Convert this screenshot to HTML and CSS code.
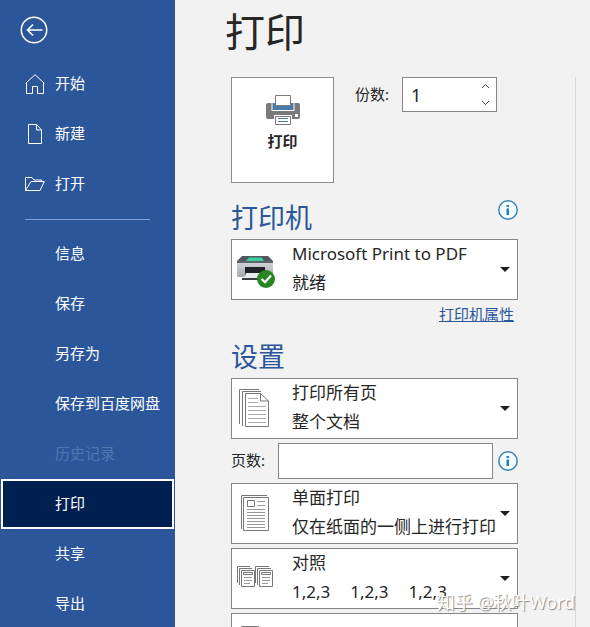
FILE: index.html
```html
<!DOCTYPE html>
<html lang="zh-CN">
<head>
  <meta charset="UTF-8" />
  <meta name="viewport" content="width=device-width, initial-scale=1.0" />
  <title>打印</title>
  <link rel="stylesheet" href="styles.css">
</head>
<body>
  <div class="backstage">
    <nav class="sidebar">
      <button type="button" class="back" aria-label="返回">
        <svg width="28" height="28" viewBox="0 0 28 28" fill="none" stroke="#fff">
          <circle cx="14" cy="14" r="12.7" stroke-width="1.5" />
          <path d="M22.5 14H7.5M13 8.5L7.5 14l5.500 5.500" stroke-width="1.6" />
        </svg>
      </button>

      <a href="#home" class="nav-item">
        <svg class="nav-icon" width="20" height="22" viewBox="0 0 20 22" fill="none" stroke="#fff">
          <path d="M1.500 9.500V20.500H7.500V13.500H12.500V20.500H18.500V9.500M.7 10.300L10 1.700l9.300 8.600" />
        </svg>
        开始
      </a>
      <a href="#new" class="nav-item">
        <svg class="nav-icon" width="20" height="22" viewBox="0 0 20 22" fill="none" stroke="#fff">
          <path d="M3.500 1.500H11.500L16.500 7V20.500H3.500ZM11.500 1.500V7H16.500" />
        </svg>
        新建
      </a>
      <a href="#open" class="nav-item">
        <svg class="nav-icon" width="20" height="22" viewBox="0 0 20 22" fill="none" stroke="#fff">
          <path d="M.5 17.500V4.500H7L9 7H16.500V8.500M.5 17.500L6 8.500H19.300L15 17.500Z" />
        </svg>
        打开
      </a>

      <hr class="nav-divider">

      <a href="#info" class="nav-item">信息</a>
      <a href="#save" class="nav-item">保存</a>
      <a href="#save-as" class="nav-item">另存为</a>
      <a href="#save-cloud" class="nav-item">保存到百度网盘</a>
      <a class="nav-item disabled" aria-disabled="true">历史记录</a>
      <a href="#print" class="nav-item active" aria-current="page">打印</a>
      <a href="#share" class="nav-item">共享</a>
      <a href="#export" class="nav-item">导出</a>
    </nav>

    <main class="content">
      <h1>打印</h1>

      <form class="panel">
        <div class="print-row">
          <button type="submit" class="print-button">
            <svg width="36" height="32" viewBox="0 0 36 32">
              <path d="M3 9H33Q35 9 35 11V23Q35 25 33 25H3Q1 25 1 23V11Q1 9 3 9Z" fill="#7a7a7a" />
              <path d="M6.500 8H29.500V17H6.500Z" fill="#fff" />
              <path d="M7.500 9H28.500V16H7.500Z" fill="#4a7ba8" />
              <path d="M10.500 1.500H25.500V11.500H10.500Z" fill="#fff" stroke="#7a7a7a" />
              <path d="M9 21H27V25H9Z" fill="#fff" />
              <path d="M10.500 22.500H25.500V30.500H10.500Z" fill="#fff" stroke="#7a7a7a" />
              <path d="M13 24.500H23M13 27.500H23" stroke="#4a7ba8" />
              <path d="M30 20H33V23H30Z" fill="#fff" />
            </svg>
            打印
          </button>
          <div class="copies">
            <label for="copies">份数:</label>
            <div class="spinner">
              <input type="number" id="copies" min="1" value="1">
              <div class="spinner-buttons">
                <button type="button" aria-label="增加">
                  <svg width="9" height="6" viewBox="0 0 9 6" fill="none" stroke="#444"><path d="M1 5l3.500-3.500L8 5" /></svg>
                </button>
                <button type="button" aria-label="减少">
                  <svg width="9" height="6" viewBox="0 0 9 6" fill="none" stroke="#444"><path d="M1 1l3.500 3.500L8 1" /></svg>
                </button>
              </div>
            </div>
          </div>
        </div>

        <div class="section-head">
          <h2>打印机</h2>
          <button type="button" class="info" aria-label="打印机信息">
            <svg width="20" height="20" viewBox="0 0 20 20">
              <circle cx="10" cy="10" r="9.200" fill="#f2fbff" stroke="#3c83b3" stroke-width="1.500" />
              <path d="M8.500 5H11V7H8.500ZM8.500 8.500H11V15H8.500Z" fill="#2b79b5" />
            </svg>
          </button>
        </div>

        <div class="picker">
          <svg class="picker-icon" width="40" height="36" viewBox="0 0 40 36">
            <defs>
              <linearGradient id="body" x1="0" y1="0" x2="0" y2="1">
                <stop offset="0" stop-color="#d5d9de" />
                <stop offset="1" stop-color="#a3a9b0" />
              </linearGradient>
            </defs>
            <path d="M6 4H32L37 9H1Z" fill="#50575e" />
            <path d="M13 5.500H26L28 9H10Z" fill="#3ccf9e" />
            <path d="M1 9H37V24Q37 25 36 25H2Q1 25 1 24Z" fill="url(#body)" />
            <path d="M1 9H37V11H1Z" fill="#5d656d" />
            <path d="M9 15H29V23H9Z" fill="#202226" />
            <path d="M10 21H28V24L29 27H6L9 24Z" fill="#e8eaec" />
            <path d="M6 26H27V28H6Z" fill="#383b40" />
            <circle cx="30" cy="27" r="9" fill="#27861f" />
            <path d="M25.500 27L29 30.200L35 23.500" fill="none" stroke="#fff" stroke-width="2.200" />
          </svg>
          <select aria-label="打印机">
            <option>Microsoft Print to PDF</option>
          </select>
          <span class="picker-note">就绪</span>
          <span class="arrow"></span>
        </div>
        <div class="link-row">
          <a href="#printer-properties">打印机属性</a>
        </div>

        <div class="section-head">
          <h2>设置</h2>
        </div>

        <div class="settings">
          <div class="picker">
            <svg class="picker-icon" width="40" height="40" viewBox="0 0 40 40" fill="none" stroke="#777">
              <path d="M3.500 35V.5H23M6.500 37V2.500H25" />
              <path d="M9.500 4.500H24.500L32.500 12V37.500H9.500Z" fill="#fff" />
              <path d="M24.500 4.500V12H32.500" />
              <path d="M12 9.500H22M12 13.500H22M12 17.500H30M12 21.500H30M12 25.500H30M12 29.500H30M12 33.500H30" stroke="#aaa" />
            </svg>
            <select aria-label="打印范围">
              <option>打印所有页</option>
            </select>
            <span class="picker-note">整个文档</span>
            <span class="arrow"></span>
          </div>

          <div class="pages-row">
            <label for="pages">页数:</label>
            <input type="text" id="pages">
            <button type="button" class="info" aria-label="页数信息">
              <svg width="20" height="20" viewBox="0 0 20 20">
                <circle cx="10" cy="10" r="9.200" fill="#f2fbff" stroke="#3c83b3" stroke-width="1.500" />
                <path d="M8.500 5H11V7H8.500ZM8.500 8.500H11V15H8.500Z" fill="#2b79b5" />
              </svg>
            </button>
          </div>

          <div class="picker">
            <svg class="picker-icon" width="40" height="40" viewBox="0 0 40 40" fill="none" stroke="#777">
              <path d="M5.500 35V1.500H31" />
              <path d="M7.500 3.500H32.500V36.500H7.500Z" fill="#fff" />
              <path d="M11.500 6.500H18.500V12.500H11.500Z" />
              <path d="M21 7.500H29M21 11.500H29M11 15.500H29M11 18.500H29M11 21.500H29M11 24.500H29M11 27.500H29M11 30.500H29M11 33.500H29" stroke="#999" />
            </svg>
            <select aria-label="单双面">
              <option>单面打印</option>
            </select>
            <span class="picker-note">仅在纸面的一侧上进行打印</span>
            <span class="arrow"></span>
          </div>

          <div class="picker">
            <svg class="picker-icon" width="40" height="40" viewBox="0 0 40 40" fill="none" stroke="#777">
              <path d="M1.500 24V7.500H14M3.500 26V9.500H16M19.500 24V7.500H33M21.500 26V9.500H35" />
              <path d="M5.500 11.500H18.500V27.500H5.500ZM23.500 11.500H36.500V27.500H23.500Z" fill="#fff" />
              <path d="M7.500 13.500H16.500V15.500H7.500ZM25.500 13.500H34.500V15.500H25.500Z" />
              <path d="M8 18.500H16M8 21.500H16M8 24.500H14M26 18.500H34M26 21.500H34M26 24.500H32" stroke="#999" />
            </svg>
            <select aria-label="对照">
              <option>对照</option>
            </select>
            <span class="picker-note sets"><span>1,2,3</span><span>1,2,3</span><span>1,2,3</span></span>
            <span class="arrow"></span>
          </div>

          <div class="picker">
            <svg class="picker-icon" width="40" height="40" viewBox="0 0 40 40" fill="none" stroke="#777">
              <path d="M5.500 2.500H22.500L29.500 9V37.500H5.500Z" />
            </svg>
            <select aria-label="纸张方向">
              <option></option>
            </select>
            <span class="arrow"></span>
          </div>
        </div>
      </form>
    </main>
    <div class="watermark">知乎 @秋叶Word</div>
  </div>
</body>
</html>
```
FILE: styles.css
```css
* {
  box-sizing: border-box;
}

body {
  margin: 0;
  background-color: #f2f2f2;
  color: #262626;
  font-family: 'Noto Sans', 'Noto Sans CJK SC', sans-serif;
  font-size: 15px;
}

button, input, select {
  font-family: inherit;
  color: inherit;
}

button {
  padding: 0;
  border: none;
  background: none;
  cursor: pointer;
}

svg {
  display: block;
}

.backstage {
  position: relative;
  display: flex;
  height: 100vh;
  overflow: hidden;
}

/* sidebar */
.sidebar {
  flex: none;
  width: 175px;
  background-color: #2b579a;
}

.back {
  display: block;
  margin: 16px 0 15px 20px;
}

.nav-item {
  display: flex;
  align-items: center;
  height: 50px;
  padding: 0 0 4px 55px;
  color: #fff;
  text-decoration: none;
}

.nav-icon {
  margin: 4px 10px 0 -30px;
}

.nav-item.disabled {
  color: #5277b0;
}

.nav-item.active {
  margin: 0 1px;
  padding-left: 52px;
  border: 2px solid #fff;
  background-color: #002050;
}

.nav-divider {
  height: 1px;
  margin: 10px 25px 9px;
  border: none;
  background-color: #7f9fd0;
}

/* print page */
.content {
  flex: 1;
  min-width: 0;
  display: flex;
  flex-direction: column;
  padding: 2px 14px 0 50px;
}

h1 {
  margin: 0 0 15px;
  font-size: 40px;
  font-weight: normal;
  line-height: 60px;
}

.panel {
  flex: 1;
  margin-left: 6px;
  padding-right: 57px;
  border-right: 1px solid #d8d8d8;
}

.print-row {
  display: flex;
  align-items: flex-start;
  gap: 21px;
  margin-bottom: 3px;
}

.print-button {
  display: flex;
  flex-direction: column;
  align-items: center;
  gap: 5px;
  width: 103px;
  height: 106px;
  padding-top: 16px;
  border: 1px solid #8c8c8c;
  background-color: #fff;
  font-size: 15px;
  font-weight: bold;
  line-height: 20px;
}

.copies {
  display: flex;
  align-items: center;
  gap: 13px;
}

.copies label,
.pages-row label {
  padding-bottom: 3px;
}

.spinner {
  display: flex;
  width: 95px;
  height: 35px;
  border: 1px solid #868686;
  background-color: #fff;
}

.spinner input {
  flex: 1;
  min-width: 0;
  padding: 0 8px;
  border: none;
  background: none;
  font-size: 18px;
  appearance: textfield;
}

.spinner input::-webkit-inner-spin-button {
  display: none;
}

.spinner-buttons {
  display: flex;
  flex-direction: column;
  width: 22px;
}

.spinner-buttons button {
  flex: 1;
  display: grid;
  place-items: center;
}

.section-head {
  display: flex;
  justify-content: space-between;
  align-items: flex-start;
  padding: 12px 0 1px;
}

h2 {
  margin: 0;
  color: #2b579a;
  font-size: 27px;
  font-weight: normal;
  line-height: 40px;
}

.info {
  margin-top: 2px;
}

/* drop-down with an icon and a second line, all stacked in one grid cell */
.picker {
  display: grid;
  grid-template-columns: minmax(0, 1fr);
  height: 61px;
  border: 1px solid #868686;
  background-color: #fff;
  font-size: 17px;
}

.picker > * {
  grid-area: 1 / 1;
  pointer-events: none;
}

.picker select {
  width: 100%;
  padding: 0 30px 31px 60px;
  border: none;
  background: none;
  font-size: 17px;
  line-height: 28px;
  appearance: none;
  pointer-events: auto;
}

.picker-icon {
  align-self: center;
  margin-left: 4px;
}

.picker-note {
  align-self: end;
  padding: 0 0 2px 60px;
  line-height: 28px;
}

.sets {
  display: flex;
  gap: 20px;
}

.arrow {
  place-self: center end;
  margin-right: 7px;
  border: 5px solid transparent;
  border-top-color: #1f1f1f;
  border-bottom: none;
}

.link-row {
  padding: 3px 4px 0 0;
  line-height: 22px;
  text-align: right;
}

.link-row a {
  color: #2b579a;
}

.settings {
  display: grid;
  grid-template-columns: minmax(0, 1fr);
  gap: 4px;
}

.pages-row {
  display: flex;
  align-items: center;
  gap: 5px;
}

.pages-row label {
  width: 42px;
}

.pages-row input {
  flex: 1;
  min-width: 0;
  height: 36px;
  padding: 0 8px;
  border: 1px solid #868686;
  background-color: #fff;
  font-size: 17px;
}

.pages-row .info {
  margin-top: 0;
}

.watermark {
  position: absolute;
  right: 15px;
  bottom: 12px;
  color: #fff;
  font-size: 18px;
  line-height: 26px;
  text-shadow: 1px 1px 1px #888;
  pointer-events: none;
}
```
